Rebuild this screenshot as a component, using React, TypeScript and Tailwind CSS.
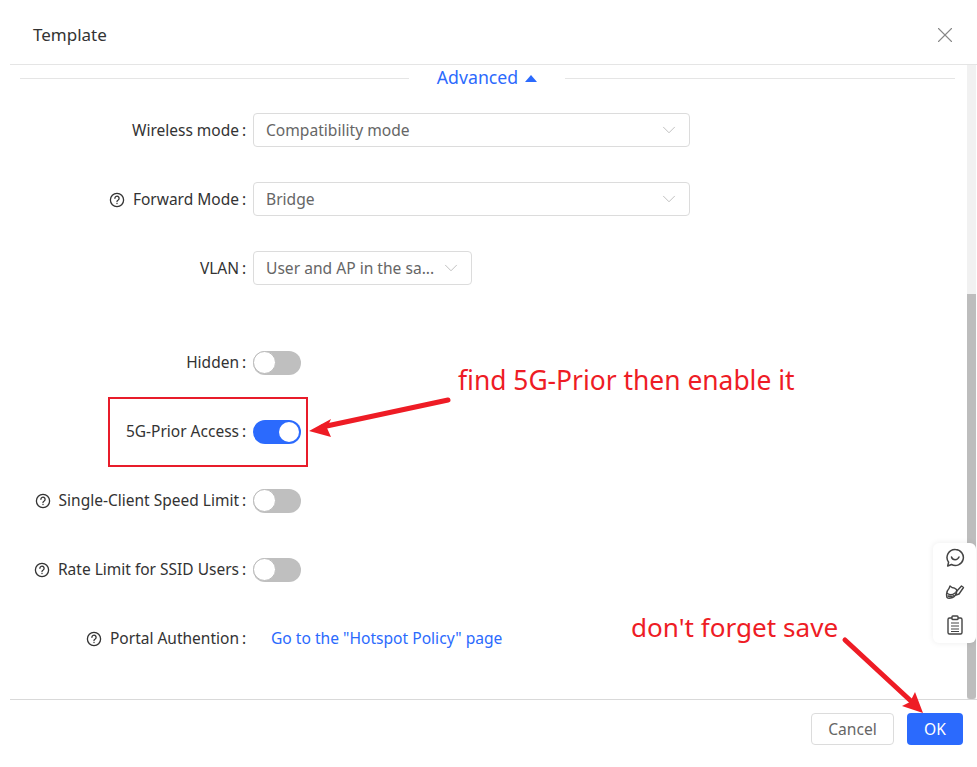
import { ChevronDown, X } from "lucide-react";

const font = { fontFamily: '"Noto Sans", "Noto Sans CJK SC", sans-serif' };

function HelpIcon() {
  return (
    <svg width="16" height="16" viewBox="0 0 16 16" fill="none" stroke="#333" strokeWidth="1.3" className="mr-[8px] shrink-0">
      <circle cx="8" cy="8" r="6.6" />
      <path d="M5.9 6.300a2.100 2.100 0 1 1 3.300 1.700c-.8.5-1.200.9-1.200 1.600" strokeLinecap="round" />
      <circle cx="8" cy="11.500" r=".7" fill="#333" stroke="none" />
    </svg>
  );
}

function Label({ text, help }: { text: string; help?: boolean }) {
  return (
    <div className="w-[253px] shrink-0 flex items-center justify-end pt-[2px] pr-[6px] text-[15.5px] text-[#333]">
      {help && <HelpIcon />}
      <span className="whitespace-nowrap">{text}</span>
      <span className="ml-[3px] w-[5px]">:</span>
    </div>
  );
}

function Select({ value, width }: { value: string; width: string }) {
  return (
    <div className={`h-[34px] ${width} flex items-center justify-between pl-[12px] pr-[9px] border border-[#dcdcdc] rounded-[4px] bg-white`}>
      <span className="pt-[2px] text-[15.6px] text-[#666] whitespace-nowrap">{value}</span>
      <ChevronDown size={22} strokeWidth={0.8} color="#aaa" />
    </div>
  );
}

function Toggle({ on }: { on?: boolean }) {
  if (on) {
    return (
      <div className="mt-[1px] h-[24px] w-[48px] rounded-full bg-[#2b6afd] flex items-center justify-end pr-[2px]">
        <div className="w-[20px] h-[20px] rounded-full bg-white" />
      </div>
    );
  }
  return (
    <div className="mt-[1px] h-[24px] w-[48px] rounded-full bg-[#bfbfbf] flex items-center">
      <div className="w-[23px] h-[23px] rounded-full bg-white border border-[#bbb]" />
    </div>
  );
}

function Row({ children }: { children: React.ReactNode }) {
  return <div className="flex items-center h-[34px] mb-[35px]">{children}</div>;
}

export default function App() {
  return (
    <div className="relative h-[767px] w-[977px] bg-white overflow-hidden flex flex-col" style={font}>
      {/* Header */}
      <div className="h-[65px] shrink-0 ml-[10px] flex items-center justify-between pt-[5px] pl-[23px] pr-[19px] border-b border-[#e5e5e5]">
        <span className="text-[17px] text-[#333]">Template</span>
        <X size={26} strokeWidth={1} color="#888" />
      </div>

      {/* Body */}
      <div className="flex-1 flex min-h-0">
        <div className="flex-1 pt-[3px]">
          <div className="flex items-center h-[20px] mb-[25px]">
            <div className="ml-[20px] w-[389px] h-px bg-[#e5e5e5]" />
            <div className="w-[156px] flex items-center justify-center gap-[7px] text-[#2b6afd] text-[17.700px]">
              <span className="pb-[2px]">Advanced</span>
              <span className="w-0 h-0 border-x-[6px] border-x-transparent border-b-[7px] border-b-[#2b6afd]" />
            </div>
            <div className="w-[390px] h-px bg-[#e5e5e5]" />
          </div>

          <Row>
            <Label text="Wireless mode" />
            <Select value="Compatibility mode" width="w-[437px]" />
          </Row>
          <Row>
            <Label text="Forward Mode" help />
            <Select value="Bridge" width="w-[437px]" />
          </Row>
          <Row>
            <Label text="VLAN" />
            <Select value="User and AP in the sa..." width="w-[219px]" />
          </Row>
          <div className="h-[25px]" />
          <Row>
            <Label text="Hidden" />
            <Toggle />
          </Row>
          <Row>
            <Label text="5G-Prior Access" />
            <Toggle on />
          </Row>
          <Row>
            <Label text="Single-Client Speed Limit" help />
            <Toggle />
          </Row>
          <Row>
            <Label text="Rate Limit for SSID Users" help />
            <Toggle />
          </Row>
          <Row>
            <Label text="Portal Authention" help />
            <a className="ml-[18px] pt-[2px] text-[15.6px] text-[#2b6afd] whitespace-nowrap">Go to the "Hotspot Policy" page</a>
          </Row>
        </div>

        {/* Scrollbar */}
        <div className="w-[10px] shrink-0 pr-[1px] flex flex-col justify-end">
          <div className="flex-1 flex flex-col justify-end bg-[#f1f1f1]">
            <div className="h-[405px] bg-[#bdbdbd] rounded-b-[3px]" />
          </div>
        </div>
      </div>

      {/* Footer */}
      <div className="h-[68px] shrink-0 ml-[10px] border-t border-[#d9d9d9] flex items-start justify-end gap-[13px] pt-[13px] pr-[14px]">
        <button className="h-[32px] w-[83px] pt-[2px] border border-[#dcdcdc] rounded-[4px] bg-white text-[15.6px] text-[#666]">Cancel</button>
        <button className="h-[32px] w-[56px] pt-[2px] rounded-[4px] bg-[#2b6afd] text-[15.6px] text-white">OK</button>
      </div>

      {/* Floating tools */}
      <div className="absolute left-[933px] top-[543px] w-[43px] h-[100px] bg-white rounded-[6px] shadow-[0_0_6px_rgba(0,0,0,0.08)] flex flex-col items-center justify-between pt-[5px] pb-[8px]">
        <svg width="20" height="20" viewBox="0 0 20 20" fill="none" stroke="#444" strokeWidth="1.500" strokeLinecap="round" strokeLinejoin="round">
          <path d="M10.500 1.500a8 8 0 1 1-4 15l-3.800 1.500.9-3.800a8 8 0 0 1 6.900-12.700z" />
          <path d="M6.500 9c1 3.500 6 3.500 7.500 0" />
        </svg>
        <svg width="20" height="20" viewBox="0 0 20 20" fill="none" stroke="#444" strokeWidth="1.400" strokeLinecap="round" strokeLinejoin="round">
          <path d="M2 15.500c-1-3.500 0-7 2-9l1-2.500 2 1.500c2 .2 3.500 1 4.500 2 .5 3-1 6.500-4 8-2 .8-4.500 1-5.500 0z" />
          <path d="M2.500 11.500c2 1.500 5 1.500 7.500-.5M3 14c2 .8 4 .8 6-.5" />
          <path d="M11 10l5.500-6 2 1.500-4.500 6.500-3 1z" />
        </svg>
        <svg width="18" height="20" viewBox="0 0 18 20" fill="none" stroke="#444" strokeWidth="1.400" strokeLinejoin="round">
          <rect x="2" y="3" width="14" height="16" rx="1.500" />
          <rect x="6" y="1" width="6" height="3.500" rx="0.800" fill="#fff" />
          <path d="M5 8h8M5 11h8M5 14h8M5 16.500h8" strokeWidth="1.200" />
        </svg>
      </div>

      {/* Screenshot annotations */}
      <div className="absolute left-[108px] top-[397px] w-[200px] h-[70px] border-2 border-[#e81c2a]" />
      <div className="absolute left-[458px] top-[361px] text-[26.400px] leading-[38px] text-[#ee1c25] whitespace-nowrap">find 5G-Prior then enable it</div>
      <div className="absolute left-[631px] top-[608px] text-[26.100px] leading-[38px] text-[#ee1c25] whitespace-nowrap">don't forget save</div>
      <svg className="absolute left-0 top-0 pointer-events-none" width="977" height="767" viewBox="0 0 977 767" fill="none">
        <path d="M448 400L322 427" stroke="#ee1c25" strokeWidth="5" strokeLinecap="round" />
        <path d="M309 431L331 419L327 428L331 437Z" fill="#ee1c25" />
        <path d="M845 640L912 702" stroke="#ee1c25" strokeWidth="5" strokeLinecap="round" />
        <path d="M923 713L915 692L910 702L902 706Z" fill="#ee1c25" />
      </svg>
    </div>
  );
}
